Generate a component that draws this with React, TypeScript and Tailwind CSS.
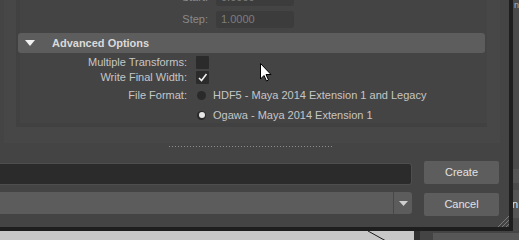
import React from 'react';

function Check() {
  return (
    <svg width="13" height="13" viewBox="0 0 13 13" className="block">
      <polyline points="3,7 5.5,9.5 10.5,3" fill="none" stroke="#f0f0f0" strokeWidth="1.6" />
    </svg>
  );
}

function Radio({ on }: { on?: boolean }) {
  return (
    <div className="flex h-[9px] w-[9px] items-center justify-center rounded-full bg-[#2a2a2a]">
      {on && <div className="h-[6px] w-[6px] rounded-full bg-[#e6e6e6]" />}
    </div>
  );
}

function NumberRow({ label, value, first }: { label: string; value: string; first?: boolean }) {
  return (
    <div className={`flex h-[17px] shrink-0 items-center ${first ? 'mt-[-11px]' : 'mt-[5px]'}`}>
      <div className="w-[188px] text-right text-[#8a8a8a]">{label}</div>
      <div className="ml-[8px] flex h-[17px] w-[78px] items-center rounded-[3px] bg-[#3c3c3c] pl-[5px] text-[#7c7c7c]">
        {value}
      </div>
    </div>
  );
}

function AdvancedOptions() {
  return (
    <div className="ml-[4px] flex h-[143px] w-[496px] shrink-0 overflow-hidden bg-[#474747]">
      <div className="ml-[12px] h-[127px] w-[471px] bg-[#414141] pb-[4px] pl-[4px]">
        <div className="flex h-full flex-col bg-[#444444]">
          <NumberRow label="Start:" value="0.0000" first />
          <NumberRow label="Step:" value="1.0000" />

          <div className="ml-[-2px] mt-[5px] flex h-[20px] w-[467px] shrink-0 items-center rounded-[3px] bg-[#5d5d5d]">
            <svg width="10" height="6" viewBox="0 0 10 6" className="ml-[7px] block">
              <polygon points="0,0 10,0 5,6" fill="#f2f2f2" />
            </svg>
            <span className="ml-[17px] font-bold text-[#dadada]">Advanced Options</span>
          </div>

          <div className="flex flex-col pt-[3px]">
            <div className="flex h-[13px] items-center">
              <div className="w-[167px] text-right">Multiple Transforms:</div>
              <div className="ml-[9px] h-[13px] w-[13px] rounded-[1px] bg-[#2b2b2b]" />
            </div>
            <div className="mt-[2px] flex h-[13px] items-center">
              <div className="w-[167px] text-right">Write Final Width:</div>
              <div className="ml-[9px] h-[13px] w-[13px] rounded-[1px] bg-[#2b2b2b]">
                <Check />
              </div>
            </div>
            <div className="mt-[1px] flex h-[20px] items-center">
              <div className="w-[167px] text-right">File Format:</div>
              <div className="ml-[10px]">
                <Radio />
              </div>
              <span className="ml-[7px]">HDF5 - Maya 2014 Extension 1 and Legacy</span>
            </div>
            <div className="flex h-[20px] items-center">
              <div className="w-[167px]" />
              <div className="ml-[10px]">
                <Radio on />
              </div>
              <span className="ml-[7px]">Ogawa - Maya 2014 Extension 1</span>
            </div>
          </div>
        </div>
      </div>
    </div>
  );
}

function Window() {
  return (
    <div className="relative flex h-[231px] w-[513px] shrink-0 flex-col border-b-4 border-r-4 border-[#1e1e1e] bg-[#444444]">
      <AdvancedOptions />

      <div className="h-[18px] shrink-0">
        <div className="ml-[169px] mt-[3px] h-px w-[163px] bg-[repeating-linear-gradient(90deg,#8e8e8e_0px,#8e8e8e_1px,transparent_1px,transparent_3px)]" />
      </div>

      <div className="flex h-[23px] shrink-0 gap-[12px]">
        <div className="mt-[2px] h-[22px] w-[412px] rounded-r-[3px] border border-l-0 border-[#4e4e4e] bg-[#2b2b2b]" />
        <button className="flex h-[23px] w-[75px] items-center justify-center rounded-[2px] bg-[#5d5d5d] text-[#e2e2e2]">
          Create
        </button>
      </div>

      <div className="mt-[8px] flex shrink-0 gap-[12px]">
        <div className="flex h-[22px] w-[412px] rounded-r-[3px] bg-[#5c5c5c]">
          <div className="flex-1" />
          <div className="flex w-[19px] items-center justify-center border-l border-[#484848]">
            <svg width="9" height="5" viewBox="0 0 9 5" className="block">
              <polygon points="0,0 9,0 4.5,5" fill="#cfcfcf" />
            </svg>
          </div>
        </div>
        <button className="mt-[1px] flex h-[23px] w-[75px] items-center justify-center rounded-[2px] bg-[#5d5d5d] text-[#e2e2e2]">
          Cancel
        </button>
      </div>

      <svg width="12" height="12" viewBox="0 0 12 12" className="absolute bottom-0 right-0 block">
        <line x1="12" y1="1" x2="1" y2="12" stroke="#7a7a7a" strokeWidth="1" />
        <line x1="12" y1="5" x2="5" y2="12" stroke="#7a7a7a" strokeWidth="1" />
        <line x1="12" y1="9" x2="9" y2="12" stroke="#7a7a7a" strokeWidth="1" />
      </svg>
    </div>
  );
}

function SideStrip() {
  return (
    <div className="flex w-[6px] flex-col overflow-hidden bg-[#4a4a4a]">
      <div className="mt-[1px] h-[8px] pl-[1px] text-[9px] leading-none text-[#b8b8b8]">n</div>
      <div className="mt-[160px] h-[14px] bg-[#555555]" />
      <div className="mt-[7px] flex h-[28px] items-center bg-[#555555] text-[#dfe6ef]">
        <span className="ml-[-1px]">n</span>
      </div>
    </div>
  );
}

function BottomStrip() {
  return (
    <div className="flex h-[9px] shrink-0">
      <div className="relative w-[414px] bg-[#c8c8c8]">
        <svg width="20" height="10" viewBox="0 0 20 10" className="absolute left-[367px] top-0 block">
          <line x1="1" y1="0" x2="19" y2="10" stroke="#1a1a1a" strokeWidth="1" />
        </svg>
      </div>
      <div className="w-[6px] bg-[#303030]" />
      <div className="w-[13px] bg-[#444444]" />
      <div className="flex-1 border-t-2 border-[#444444] bg-[#575757]" />
    </div>
  );
}

function Cursor() {
  return (
    <svg width="12" height="19" viewBox="0 0 12 19" className="absolute left-[260px] top-[63px] block">
      <path d="M0.5 0.5 L0.5 16 L4 12.5 L6.5 18 L8.5 17 L6 11.5 L11 11.5 Z" fill="#ffffff" stroke="#000000" strokeWidth="1" />
    </svg>
  );
}

export default function App() {
  return (
    <div className="relative flex h-[240px] w-[519px] flex-col overflow-hidden bg-[#c8c8c8] font-['Liberation_Sans',Arial,sans-serif] text-[11px] leading-none text-[#c6c6c6]">
      <div className="flex h-[231px] shrink-0">
        <Window />
        <SideStrip />
      </div>
      <BottomStrip />
      <Cursor />
    </div>
  );
}
